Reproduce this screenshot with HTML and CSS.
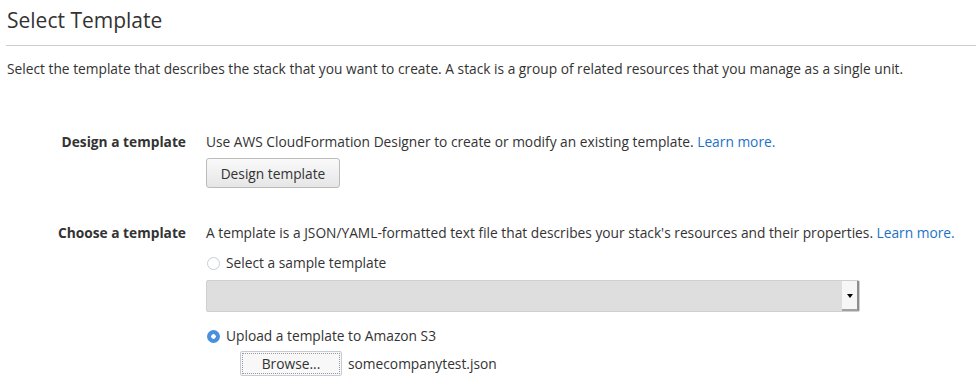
FILE: index.html
```html
<!DOCTYPE html>
<html lang="en">
<head>
    <meta charset="UTF-8">
    <title>Select Template</title>
    <link rel="stylesheet" href="styles.css">
</head>
<body>
    <div class="page">
        <h1>Select Template</h1>
        <p class="intro">Select the template that describes the stack that you want to create. A stack is a group of related resources that you manage as a single unit.</p>

        <div class="form-row design-row">
            <div class="row-label">Design a template</div>
            <div class="row-body">
                <p>Use AWS CloudFormation Designer to create or modify an existing template. <a href="#">Learn more.</a></p>
                <button class="btn">Design template</button>
            </div>
        </div>

        <div class="form-row choose-row">
            <div class="row-label">Choose a template</div>
            <div class="row-body">
                <p>A template is a JSON/YAML-formatted text file that describes your stack's resources and their properties. <a href="#">Learn more.</a></p>
                <label class="radio-line">
                    <span class="radio"></span>
                    Select a sample template
                </label>
                <div class="select-box">
                    <span class="select-arrow"></span>
                </div>
                <label class="radio-line checked-line">
                    <span class="radio checked"></span>
                    Upload a template to Amazon S3
                </label>
                <div class="file-line">
                    <span class="browse">Browse...</span>
                    <span class="file-name">somecompanytest.json</span>
                </div>
            </div>
        </div>
    </div>
</body>
</html>
```

FILE: styles.css
```css
body {
    margin: 0;
    font-family: "Open Sans", Arial, sans-serif;
    font-size: 13.75px;
    color: #333;
    background: #fff;
}
.page {
    padding: 0 0 0 6px;
}
h1 {
    font-size: 21px;
    font-weight: normal;
    color: #333;
    margin: 0;
    padding: 5px 0 0 1px;
    height: 40px;
    line-height: 30px;
    border-bottom: 1px solid #ccc;
}
.intro {
    margin: 14px 0 0 1px;
    line-height: 18px;
}
.form-row {
    display: flex;
    gap: 20px;
}
.design-row {
    margin-top: 55px;
}
.choose-row {
    margin-top: 36px;
}
.row-label {
    width: 180px;
    text-align: right;
    font-weight: bold;
    line-height: 18px;
}
.row-body {
    flex: 1;
}
.row-body p {
    margin: 0;
    line-height: 18px;
}
a {
    color: #1a73c8;
    text-decoration: none;
}
.btn {
    margin-top: 7px;
    height: 30px;
    width: 134px;
    padding: 0;
    font-family: inherit;
    font-size: 13.75px;
    color: #333;
    border: 1px solid #bbb;
    border-radius: 3px;
    background: linear-gradient(to bottom, #fafafa, #e6e6e6);
}
.radio-line {
    display: flex;
    align-items: center;
    gap: 6px;
    margin-top: 12px;
    line-height: 18px;
    padding-left: 1px;
}
.radio {
    width: 11px;
    height: 11px;
    border: 1px solid #c8cdd8;
    border-radius: 50%;
    background: #fff;
}
.radio.checked {
    width: 13px;
    height: 13px;
    border: none;
    background: radial-gradient(circle, #fff 0 2px, #4a8fe0 2.5px);
}
.select-box {
    position: relative;
    margin-top: 8px;
    width: 652px;
    height: 30px;
    background: #dedede;
    border: 1px solid #cfcfcf;
    border-radius: 2px;
}
.select-arrow {
    position: absolute;
    right: 0;
    top: 0;
    width: 15px;
    height: 28px;
    background: #f6f6f7;
    border-right: 2px solid #8e8e8e;
    border-bottom: 2px solid #a0a0a0;
}
.select-arrow::after {
    content: "";
    position: absolute;
    left: 5px;
    top: 13px;
    border-left: 3px solid transparent;
    border-right: 3px solid transparent;
    border-top: 4px solid #000;
}
.checked-line {
    margin-top: 15px;
}
.file-line {
    display: flex;
    align-items: center;
    gap: 6px;
    margin-top: 6px;
    padding-left: 34px;
}
.browse {
    width: 100px;
    height: 23px;
    line-height: 23px;
    text-align: center;
    border: 1px solid #c6cbd6;
    border-radius: 2px;
    outline: 1px dotted #999;
    outline-offset: -3px;
    background: #f8f8f8;
}
```
